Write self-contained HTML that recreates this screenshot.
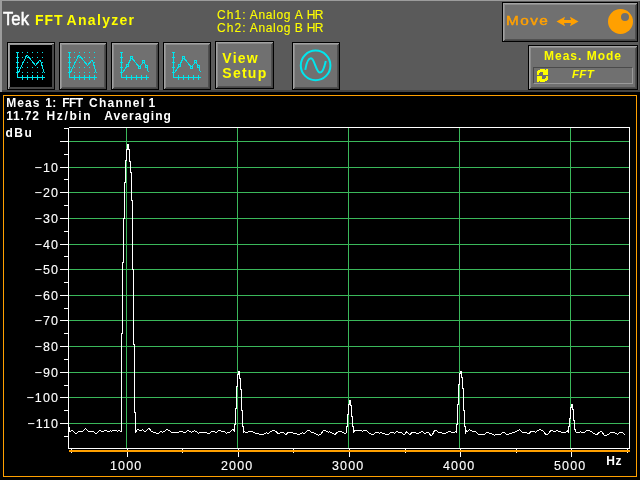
<!DOCTYPE html>
<html><head><meta charset="utf-8"><title>Tek FFT Analyzer</title>
<style>
html,body{margin:0;padding:0;background:#000;}
body{width:640px;height:480px;position:relative;overflow:hidden;font-family:"Liberation Sans",sans-serif;}
.abs{position:absolute;}
#top{left:0;top:0;width:640px;height:92px;background:#5a5a5a;box-shadow:inset 2px 1px 0 #9c9c9c, inset -1px -2px 0 #444;}
.btn{position:absolute;background:#707070;border:1px solid #000;box-sizing:border-box;
  box-shadow:inset 1px 1px 0 #a2a2a2, inset -1px -1px 0 #444, inset 2px 2px 0 #8c8c8c, inset -2px -2px 0 #505050;}
.btn.sel{background:#000;box-shadow:inset 1px 1px 0 #a6a6a6, inset -2px -2px 0 #484848, inset 2px 2px 0 #929292;}
.t{position:absolute;white-space:nowrap;line-height:1;}
.y{color:#ffff00;}
.o{color:#ffa000;}
.w{color:#fff;}
svg{position:absolute;left:0;top:0;}
.ax{font-family:"Liberation Sans",sans-serif;font-size:12.5px;fill:#fff;letter-spacing:1.15px;stroke:#fff;stroke-width:0.12px;}
#wrap{position:absolute;left:0;top:0;width:640px;height:480px;will-change:transform;}
</style></head><body><div id="wrap">
<div id="top" class="abs"></div>
<div class="t w" style="left:3px;top:9px;font-size:19px;-webkit-text-stroke:0.5px #fff;transform-origin:0 0;transform:scaleX(0.88);">Tek</div>
<div class="t y" style="left:35px;top:13px;font-size:14px;font-weight:bold;letter-spacing:0.95px;">FFT</div>
<div class="t y" style="left:66.6px;top:13px;font-size:14px;font-weight:bold;letter-spacing:1.3px;">Analyzer</div>
<div class="t y" style="left:216.9px;top:8.5px;font-size:12px;letter-spacing:1.1px;-webkit-text-stroke:0.1px #ff0;">Ch1:</div>
<div class="t y" style="left:249.75px;top:8.5px;font-size:12px;letter-spacing:0.67px;-webkit-text-stroke:0.1px #ff0;">Analog</div>
<div class="t y" style="left:294.8px;top:8.5px;font-size:12px;letter-spacing:0px;-webkit-text-stroke:0.1px #ff0;">A</div>
<div class="t y" style="left:306.8px;top:8.5px;font-size:12px;letter-spacing:-0.6px;-webkit-text-stroke:0.1px #ff0;">HR</div>
<div class="t y" style="left:216.9px;top:21.8px;font-size:12px;letter-spacing:1.1px;-webkit-text-stroke:0.1px #ff0;">Ch2:</div>
<div class="t y" style="left:249.75px;top:21.8px;font-size:12px;letter-spacing:0.67px;-webkit-text-stroke:0.1px #ff0;">Analog</div>
<div class="t y" style="left:294.7px;top:21.8px;font-size:12px;letter-spacing:0px;-webkit-text-stroke:0.1px #ff0;">B</div>
<div class="t y" style="left:306.8px;top:21.8px;font-size:12px;letter-spacing:-0.6px;-webkit-text-stroke:0.1px #ff0;">HR</div>

<div class="btn sel" style="left:7px;top:42px;width:48px;height:48px;"></div>
<div class="btn" style="left:59px;top:42px;width:48px;height:48px;"></div>
<div class="btn" style="left:111px;top:42px;width:48px;height:48px;"></div>
<div class="btn" style="left:163px;top:42px;width:48px;height:48px;"></div>
<div class="btn" style="left:215px;top:41px;width:59px;height:48px;"></div>
<div class="t y" style="left:222.3px;top:51.25px;font-size:14px;font-weight:bold;letter-spacing:1.25px;line-height:14.5px;">View<br>Setup</div>
<div class="btn" style="left:292px;top:42px;width:48px;height:48px;"></div>

<div class="btn" style="left:502px;top:2px;width:136px;height:40px;"></div>
<div class="t o" style="left:505.8px;top:14px;font-size:13px;letter-spacing:1.2px;-webkit-text-stroke:0.45px #ffa000;transform-origin:0 0;transform:scaleX(1.18);">Move</div>
<div class="btn" style="left:528px;top:45px;width:110px;height:45px;"></div>
<div class="t y" style="left:544px;top:50px;font-size:12px;font-weight:bold;letter-spacing:1.0px;">Meas. Mode</div>
<div class="abs" style="left:533px;top:67px;width:100px;height:17px;box-sizing:border-box;background:#707070;border:1px solid;border-color:#4a4a4a #9a9a9a #9a9a9a #4a4a4a;"></div>
<div class="t y" style="left:572px;top:68.8px;font-size:11.5px;font-weight:bold;font-style:italic;letter-spacing:0.3px;">FFT</div>

<div class="abs" style="left:3px;top:95px;width:634px;height:382px;box-sizing:border-box;border:1px solid #ffa000;"></div>
<div class="t w" style="left:6.25px;top:97px;font-size:12px;font-weight:bold;letter-spacing:1.07px;">Meas</div>
<div class="t w" style="left:45.3px;top:97px;font-size:12px;font-weight:bold;letter-spacing:0.3px;">1:</div>
<div class="t w" style="left:62.2px;top:97px;font-size:12px;font-weight:bold;letter-spacing:-0.6px;">FFT</div>
<div class="t w" style="left:89px;top:97px;font-size:12px;font-weight:bold;letter-spacing:1.29px;">Channel</div>
<div class="t w" style="left:148.5px;top:97px;font-size:12px;font-weight:bold;letter-spacing:0px;">1</div>
<div class="t w" style="left:6.3px;top:110px;font-size:12px;font-weight:bold;letter-spacing:0.8px;">11.72</div>
<div class="t w" style="left:46.6px;top:110px;font-size:12px;font-weight:bold;letter-spacing:1.61px;">Hz/bin</div>
<div class="t w" style="left:104.2px;top:110px;font-size:12px;font-weight:bold;letter-spacing:1.06px;">Averaging</div>

<div class="t w" style="left:5.5px;top:127.3px;font-size:12px;font-weight:bold;letter-spacing:1.5px;">dBu</div>
<div class="t w" style="left:606.3px;top:455px;font-size:12px;font-weight:bold;letter-spacing:0.5px;">Hz</div>

<svg width="640" height="480" viewBox="0 0 640 480">
<g shape-rendering="crispEdges">
<rect x="69" y="141" width="560" height="1" fill="#3ab85a"/><rect x="69" y="167" width="560" height="1" fill="#3ab85a"/><rect x="69" y="192" width="560" height="1" fill="#3ab85a"/><rect x="69" y="218" width="560" height="1" fill="#3ab85a"/><rect x="69" y="244" width="560" height="1" fill="#3ab85a"/><rect x="69" y="269" width="560" height="1" fill="#3ab85a"/><rect x="69" y="295" width="560" height="1" fill="#3ab85a"/><rect x="69" y="320" width="560" height="1" fill="#3ab85a"/><rect x="69" y="346" width="560" height="1" fill="#3ab85a"/><rect x="69" y="372" width="560" height="1" fill="#3ab85a"/><rect x="69" y="397" width="560" height="1" fill="#3ab85a"/><rect x="69" y="423" width="560" height="1" fill="#3ab85a"/><rect x="126" y="128" width="1" height="320" fill="#3ab85a"/><rect x="237" y="128" width="1" height="320" fill="#3ab85a"/><rect x="348" y="128" width="1" height="320" fill="#3ab85a"/><rect x="459" y="128" width="1" height="320" fill="#3ab85a"/><rect x="570" y="128" width="1" height="320" fill="#3ab85a"/>
<rect x="69" y="127" width="561" height="1" fill="#fff"/>
<rect x="68" y="128" width="1" height="321" fill="#fff"/>
<rect x="629" y="127" width="1" height="322" fill="#fff"/>
<rect x="68" y="448" width="562" height="1" fill="#fff"/>
<rect x="60" y="141" width="9" height="1" fill="#fff"/><rect x="64" y="128" width="5" height="1" fill="#fff"/><rect x="60" y="167" width="9" height="1" fill="#fff"/><rect x="64" y="154" width="5" height="1" fill="#fff"/><rect x="60" y="192" width="9" height="1" fill="#fff"/><rect x="64" y="179" width="5" height="1" fill="#fff"/><rect x="60" y="218" width="9" height="1" fill="#fff"/><rect x="64" y="205" width="5" height="1" fill="#fff"/><rect x="60" y="244" width="9" height="1" fill="#fff"/><rect x="64" y="231" width="5" height="1" fill="#fff"/><rect x="60" y="269" width="9" height="1" fill="#fff"/><rect x="64" y="256" width="5" height="1" fill="#fff"/><rect x="60" y="295" width="9" height="1" fill="#fff"/><rect x="64" y="282" width="5" height="1" fill="#fff"/><rect x="60" y="320" width="9" height="1" fill="#fff"/><rect x="64" y="308" width="5" height="1" fill="#fff"/><rect x="60" y="346" width="9" height="1" fill="#fff"/><rect x="64" y="333" width="5" height="1" fill="#fff"/><rect x="60" y="372" width="9" height="1" fill="#fff"/><rect x="64" y="359" width="5" height="1" fill="#fff"/><rect x="60" y="397" width="9" height="1" fill="#fff"/><rect x="64" y="385" width="5" height="1" fill="#fff"/><rect x="60" y="423" width="9" height="1" fill="#fff"/><rect x="64" y="410" width="5" height="1" fill="#fff"/><rect x="64" y="436" width="5" height="1" fill="#fff"/><rect x="127" y="449" width="1" height="8" fill="#fff"/><rect x="238" y="449" width="1" height="8" fill="#fff"/><rect x="349" y="449" width="1" height="8" fill="#fff"/><rect x="460" y="449" width="1" height="8" fill="#fff"/><rect x="571" y="449" width="1" height="8" fill="#fff"/><rect x="71" y="449" width="1" height="4" fill="#fff"/><rect x="182" y="449" width="1" height="4" fill="#fff"/><rect x="293" y="449" width="1" height="4" fill="#fff"/><rect x="405" y="449" width="1" height="4" fill="#fff"/><rect x="516" y="449" width="1" height="4" fill="#fff"/><rect x="627" y="449" width="1" height="4" fill="#fff"/>
<rect x="69" y="450" width="561" height="2" fill="#ffa000"/>
</g>
<text x="59.2" y="171.6" text-anchor="end" class="ax">−10</text><text x="59.2" y="196.6" text-anchor="end" class="ax">−20</text><text x="59.2" y="222.6" text-anchor="end" class="ax">−30</text><text x="59.2" y="248.6" text-anchor="end" class="ax">−40</text><text x="59.2" y="273.6" text-anchor="end" class="ax">−50</text><text x="59.2" y="299.6" text-anchor="end" class="ax">−60</text><text x="59.2" y="324.6" text-anchor="end" class="ax">−70</text><text x="59.2" y="350.6" text-anchor="end" class="ax">−80</text><text x="59.2" y="376.6" text-anchor="end" class="ax">−90</text><text x="59.2" y="401.6" text-anchor="end" class="ax">−100</text><text x="59.2" y="427.6" text-anchor="end" class="ax">−110</text><text x="126.2" y="470" text-anchor="middle" class="ax">1000</text><text x="237.2" y="470" text-anchor="middle" class="ax">2000</text><text x="348.2" y="470" text-anchor="middle" class="ax">3000</text><text x="459.2" y="470" text-anchor="middle" class="ax">4000</text><text x="570.2" y="470" text-anchor="middle" class="ax">5000</text>
<polyline points="69.5,426.5 69.5,431.5 70.5,431.5 71.5,430.5 72.5,430.5 73.5,431.5 74.5,432.5 75.5,433.5 76.5,433.5 77.5,432.5 78.5,431.5 79.5,431.5 80.5,431.5 81.5,431.5 82.5,431.5 83.5,430.5 84.5,429.5 85.5,428.5 86.5,429.5 87.5,430.5 88.5,431.5 89.5,431.5 90.5,431.5 91.5,431.5 92.5,431.5 93.5,431.5 94.5,432.5 95.5,433.5 96.5,433.5 97.5,432.5 98.5,431.5 99.5,430.5 100.5,430.5 101.5,431.5 102.5,431.5 103.5,431.5 104.5,430.5 105.5,430.5 106.5,430.5 107.5,431.5 108.5,431.5 109.5,431.5 110.5,430.5 111.5,431.5 112.5,430.5 113.5,430.5 114.5,430.5 115.5,430.5 116.5,430.5 117.5,431.5 118.5,430.5 119.5,430.5 120.5,431.5 121.5,431.5 121.5,333.5 122.5,333.5 122.5,262.5 123.5,262.5 123.5,218.5 124.5,218.5 124.5,182.5 125.5,182.5 125.5,160.5 126.5,160.5 126.5,149.5 127.5,149.5 127.5,144.5 128.5,144.5 128.5,149.5 129.5,149.5 129.5,161.5 130.5,161.5 130.5,172.5 131.5,172.5 131.5,200.5 132.5,200.5 132.5,269.5 133.5,269.5 133.5,344.5 134.5,344.5 134.5,412.5 135.5,412.5 135.5,432.5 136.5,430.5 137.5,429.5 138.5,429.5 139.5,430.5 140.5,430.5 141.5,430.5 142.5,429.5 143.5,430.5 144.5,431.5 145.5,431.5 146.5,430.5 147.5,429.5 148.5,428.5 149.5,428.5 150.5,430.5 151.5,431.5 152.5,431.5 153.5,432.5 154.5,432.5 155.5,432.5 156.5,433.5 157.5,433.5 158.5,433.5 159.5,432.5 160.5,431.5 161.5,431.5 162.5,432.5 163.5,431.5 164.5,431.5 165.5,430.5 166.5,429.5 167.5,429.5 168.5,430.5 169.5,430.5 170.5,431.5 171.5,432.5 172.5,432.5 173.5,432.5 174.5,432.5 175.5,432.5 176.5,432.5 177.5,432.5 178.5,432.5 179.5,431.5 180.5,431.5 181.5,431.5 182.5,431.5 183.5,432.5 184.5,432.5 185.5,432.5 186.5,431.5 187.5,430.5 188.5,430.5 189.5,431.5 190.5,431.5 191.5,432.5 192.5,431.5 193.5,431.5 194.5,430.5 195.5,431.5 196.5,431.5 197.5,432.5 198.5,433.5 199.5,432.5 200.5,432.5 201.5,432.5 202.5,432.5 203.5,432.5 204.5,432.5 205.5,432.5 206.5,432.5 207.5,433.5 208.5,433.5 209.5,433.5 210.5,432.5 211.5,431.5 212.5,431.5 213.5,431.5 214.5,431.5 215.5,432.5 216.5,432.5 217.5,431.5 218.5,430.5 219.5,430.5 220.5,430.5 221.5,431.5 222.5,431.5 223.5,431.5 224.5,431.5 225.5,432.5 226.5,433.5 227.5,432.5 228.5,432.5 229.5,432.5 230.5,431.5 231.5,430.5 232.5,429.5 233.5,429.5 234.5,431.5 234.5,424.5 235.5,424.5 235.5,408.5 236.5,408.5 236.5,386.5 237.5,386.5 237.5,374.5 238.5,374.5 238.5,371.5 239.5,371.5 239.5,378.5 240.5,378.5 240.5,389.5 241.5,389.5 241.5,410.5 242.5,410.5 242.5,426.5 243.5,426.5 243.5,432.5 244.5,431.5 245.5,432.5 246.5,432.5 247.5,432.5 248.5,431.5 249.5,431.5 250.5,431.5 251.5,431.5 252.5,431.5 253.5,432.5 254.5,432.5 255.5,433.5 256.5,433.5 257.5,433.5 258.5,433.5 259.5,434.5 260.5,434.5 261.5,434.5 262.5,434.5 263.5,434.5 264.5,433.5 265.5,433.5 266.5,432.5 267.5,433.5 268.5,433.5 269.5,432.5 270.5,431.5 271.5,431.5 272.5,430.5 273.5,430.5 274.5,430.5 275.5,431.5 276.5,431.5 277.5,433.5 278.5,433.5 279.5,433.5 280.5,432.5 281.5,432.5 282.5,432.5 283.5,432.5 284.5,433.5 285.5,434.5 286.5,434.5 287.5,432.5 288.5,432.5 289.5,432.5 290.5,432.5 291.5,432.5 292.5,432.5 293.5,433.5 294.5,433.5 295.5,433.5 296.5,433.5 297.5,434.5 298.5,434.5 299.5,434.5 300.5,433.5 301.5,433.5 302.5,432.5 303.5,433.5 304.5,433.5 305.5,432.5 306.5,431.5 307.5,430.5 308.5,430.5 309.5,430.5 310.5,431.5 311.5,432.5 312.5,432.5 313.5,432.5 314.5,433.5 315.5,433.5 316.5,434.5 317.5,434.5 318.5,435.5 319.5,434.5 320.5,434.5 321.5,433.5 322.5,431.5 323.5,430.5 324.5,430.5 325.5,430.5 326.5,431.5 327.5,431.5 328.5,432.5 329.5,431.5 330.5,432.5 331.5,432.5 332.5,433.5 333.5,433.5 334.5,434.5 335.5,434.5 336.5,432.5 337.5,432.5 338.5,431.5 339.5,431.5 340.5,431.5 341.5,431.5 342.5,432.5 343.5,432.5 344.5,433.5 345.5,433.5 346.5,432.5 346.5,426.5 347.5,426.5 347.5,414.5 348.5,414.5 348.5,404.5 349.5,404.5 349.5,400.5 350.5,400.5 350.5,405.5 351.5,405.5 351.5,416.5 352.5,416.5 352.5,426.5 353.5,426.5 353.5,432.5 354.5,430.5 355.5,430.5 356.5,430.5 357.5,430.5 358.5,430.5 359.5,430.5 360.5,430.5 361.5,430.5 362.5,431.5 363.5,430.5 364.5,430.5 365.5,430.5 366.5,430.5 367.5,431.5 368.5,432.5 369.5,433.5 370.5,433.5 371.5,434.5 372.5,434.5 373.5,434.5 374.5,433.5 375.5,432.5 376.5,432.5 377.5,432.5 378.5,432.5 379.5,433.5 380.5,432.5 381.5,432.5 382.5,433.5 383.5,433.5 384.5,433.5 385.5,434.5 386.5,434.5 387.5,434.5 388.5,434.5 389.5,433.5 390.5,432.5 391.5,432.5 392.5,432.5 393.5,432.5 394.5,433.5 395.5,432.5 396.5,431.5 397.5,431.5 398.5,432.5 399.5,432.5 400.5,432.5 401.5,432.5 402.5,433.5 403.5,434.5 404.5,434.5 405.5,433.5 406.5,431.5 407.5,432.5 408.5,433.5 409.5,434.5 410.5,434.5 411.5,432.5 412.5,432.5 413.5,432.5 414.5,432.5 415.5,432.5 416.5,433.5 417.5,433.5 418.5,433.5 419.5,432.5 420.5,432.5 421.5,431.5 422.5,431.5 423.5,432.5 424.5,433.5 425.5,433.5 426.5,432.5 427.5,432.5 428.5,432.5 429.5,433.5 430.5,435.5 431.5,435.5 432.5,434.5 433.5,432.5 434.5,430.5 435.5,430.5 436.5,430.5 437.5,431.5 438.5,432.5 439.5,432.5 440.5,432.5 441.5,432.5 442.5,433.5 443.5,433.5 444.5,433.5 445.5,433.5 446.5,432.5 447.5,432.5 448.5,431.5 449.5,431.5 450.5,431.5 451.5,432.5 452.5,432.5 453.5,432.5 454.5,432.5 455.5,431.5 456.5,432.5 456.5,424.5 457.5,424.5 457.5,404.5 458.5,404.5 458.5,384.5 459.5,384.5 459.5,373.5 460.5,373.5 460.5,371.5 461.5,371.5 461.5,377.5 462.5,377.5 462.5,388.5 463.5,388.5 463.5,410.5 464.5,410.5 464.5,426.5 465.5,426.5 465.5,433.5 466.5,430.5 467.5,431.5 468.5,430.5 469.5,429.5 470.5,430.5 471.5,430.5 472.5,431.5 473.5,431.5 474.5,431.5 475.5,431.5 476.5,432.5 477.5,433.5 478.5,434.5 479.5,434.5 480.5,434.5 481.5,434.5 482.5,434.5 483.5,434.5 484.5,434.5 485.5,433.5 486.5,432.5 487.5,432.5 488.5,432.5 489.5,433.5 490.5,433.5 491.5,433.5 492.5,434.5 493.5,434.5 494.5,435.5 495.5,434.5 496.5,434.5 497.5,434.5 498.5,434.5 499.5,434.5 500.5,434.5 501.5,433.5 502.5,432.5 503.5,432.5 504.5,432.5 505.5,433.5 506.5,434.5 507.5,434.5 508.5,434.5 509.5,433.5 510.5,433.5 511.5,433.5 512.5,432.5 513.5,432.5 514.5,432.5 515.5,431.5 516.5,431.5 517.5,430.5 518.5,430.5 519.5,429.5 520.5,430.5 521.5,431.5 522.5,432.5 523.5,432.5 524.5,432.5 525.5,432.5 526.5,432.5 527.5,433.5 528.5,433.5 529.5,433.5 530.5,431.5 531.5,431.5 532.5,431.5 533.5,431.5 534.5,431.5 535.5,432.5 536.5,431.5 537.5,430.5 538.5,430.5 539.5,429.5 540.5,429.5 541.5,430.5 542.5,430.5 543.5,431.5 544.5,432.5 545.5,434.5 546.5,434.5 547.5,434.5 548.5,433.5 549.5,432.5 550.5,430.5 551.5,430.5 552.5,430.5 553.5,431.5 554.5,431.5 555.5,431.5 556.5,430.5 557.5,430.5 558.5,431.5 559.5,431.5 560.5,431.5 561.5,432.5 562.5,432.5 563.5,432.5 564.5,432.5 565.5,432.5 566.5,431.5 567.5,430.5 568.5,432.5 568.5,426.5 569.5,426.5 569.5,418.5 570.5,418.5 570.5,407.5 571.5,407.5 571.5,404.5 572.5,404.5 572.5,409.5 573.5,409.5 573.5,420.5 574.5,420.5 574.5,429.5 575.5,429.5 575.5,431.5 576.5,432.5 577.5,432.5 578.5,432.5 579.5,432.5 580.5,431.5 581.5,432.5 582.5,432.5 583.5,432.5 584.5,432.5 585.5,431.5 586.5,430.5 587.5,430.5 588.5,430.5 589.5,430.5 590.5,431.5 591.5,431.5 592.5,432.5 593.5,433.5 594.5,433.5 595.5,434.5 596.5,434.5 597.5,434.5 598.5,432.5 599.5,432.5 600.5,431.5 601.5,431.5 602.5,432.5 603.5,434.5 604.5,435.5 605.5,435.5 606.5,435.5 607.5,434.5 608.5,434.5 609.5,433.5 610.5,432.5 611.5,432.5 612.5,432.5 613.5,432.5 614.5,432.5 615.5,433.5 616.5,433.5 617.5,434.5 618.5,433.5 619.5,432.5 620.5,432.5 621.5,432.5 622.5,432.5 623.5,433.5 624.5,434.5 625.5,435.5" fill="none" stroke="#fff" stroke-width="1" shape-rendering="crispEdges"/>
<g transform="translate(7,0)" fill="#00e6ee" shape-rendering="crispEdges"><rect x="10" y="52" width="1" height="26"/><rect x="10" y="77" width="28" height="1"/><rect x="9" y="52" width="3" height="1"/><rect x="9" y="57" width="3" height="1"/><rect x="9" y="62" width="3" height="1"/><rect x="9" y="67" width="3" height="1"/><rect x="9" y="72" width="3" height="1"/><rect x="15" y="75" width="1" height="5"/><rect x="20" y="75" width="1" height="5"/><rect x="25" y="75" width="1" height="5"/><rect x="30" y="75" width="1" height="5"/><rect x="35" y="75" width="1" height="5"/><rect x="15" y="52" width="1" height="1"/><rect x="20" y="52" width="1" height="1"/><rect x="25" y="52" width="1" height="1"/><rect x="30" y="52" width="1" height="1"/><rect x="35" y="52" width="1" height="1"/><rect x="15" y="57" width="1" height="1"/><rect x="20" y="57" width="1" height="1"/><rect x="25" y="57" width="1" height="1"/><rect x="30" y="57" width="1" height="1"/><rect x="35" y="57" width="1" height="1"/><rect x="15" y="62" width="1" height="1"/><rect x="20" y="62" width="1" height="1"/><rect x="25" y="62" width="1" height="1"/><rect x="30" y="62" width="1" height="1"/><rect x="35" y="62" width="1" height="1"/><rect x="15" y="67" width="1" height="1"/><rect x="20" y="67" width="1" height="1"/><rect x="25" y="67" width="1" height="1"/><rect x="30" y="67" width="1" height="1"/><rect x="35" y="67" width="1" height="1"/><rect x="15" y="72" width="1" height="1"/><rect x="20" y="72" width="1" height="1"/><rect x="25" y="72" width="1" height="1"/><rect x="30" y="72" width="1" height="1"/><rect x="35" y="72" width="1" height="1"/></g><g transform="translate(7,0)" fill="none" stroke="#00e6ee" stroke-width="1" shape-rendering="crispEdges"><polyline points="11.5,72.5 19.5,55.5 20.5,55.5 28.5,65.5 32.5,60.5 33.5,60.5 37.5,73.5"/></g><g transform="translate(59,0)" fill="#00e6ee" shape-rendering="crispEdges"><rect x="10" y="52" width="1" height="26"/><rect x="10" y="77" width="28" height="1"/><rect x="9" y="52" width="3" height="1"/><rect x="9" y="57" width="3" height="1"/><rect x="9" y="62" width="3" height="1"/><rect x="9" y="67" width="3" height="1"/><rect x="9" y="72" width="3" height="1"/><rect x="15" y="75" width="1" height="5"/><rect x="20" y="75" width="1" height="5"/><rect x="25" y="75" width="1" height="5"/><rect x="30" y="75" width="1" height="5"/><rect x="35" y="75" width="1" height="5"/><rect x="15" y="52" width="1" height="1"/><rect x="20" y="52" width="1" height="1"/><rect x="25" y="52" width="1" height="1"/><rect x="30" y="52" width="1" height="1"/><rect x="35" y="52" width="1" height="1"/><rect x="15" y="57" width="1" height="1"/><rect x="20" y="57" width="1" height="1"/><rect x="25" y="57" width="1" height="1"/><rect x="30" y="57" width="1" height="1"/><rect x="35" y="57" width="1" height="1"/><rect x="15" y="62" width="1" height="1"/><rect x="20" y="62" width="1" height="1"/><rect x="25" y="62" width="1" height="1"/><rect x="30" y="62" width="1" height="1"/><rect x="35" y="62" width="1" height="1"/><rect x="15" y="67" width="1" height="1"/><rect x="20" y="67" width="1" height="1"/><rect x="25" y="67" width="1" height="1"/><rect x="30" y="67" width="1" height="1"/><rect x="35" y="67" width="1" height="1"/><rect x="15" y="72" width="1" height="1"/><rect x="20" y="72" width="1" height="1"/><rect x="25" y="72" width="1" height="1"/><rect x="30" y="72" width="1" height="1"/><rect x="35" y="72" width="1" height="1"/></g><g transform="translate(59,0)" fill="none" stroke="#00e6ee" stroke-width="1" shape-rendering="crispEdges"><polyline points="11.5,72.5 19.5,55.5 20.5,55.5 28.5,65.5 32.5,60.5 33.5,60.5 37.5,73.5"/></g><g transform="translate(111,0)" fill="#00e6ee" shape-rendering="crispEdges"><rect x="10" y="52" width="1" height="26"/><rect x="10" y="77" width="28" height="1"/><rect x="9" y="52" width="3" height="1"/><rect x="9" y="57" width="3" height="1"/><rect x="9" y="62" width="3" height="1"/><rect x="9" y="67" width="3" height="1"/><rect x="9" y="72" width="3" height="1"/><rect x="15" y="75" width="1" height="5"/><rect x="20" y="75" width="1" height="5"/><rect x="25" y="75" width="1" height="5"/><rect x="30" y="75" width="1" height="5"/><rect x="35" y="75" width="1" height="5"/></g><g transform="translate(111,0)" fill="none" stroke="#00e6ee" stroke-width="1" shape-rendering="crispEdges"><polyline points="11.5,72.5 16.5,65.5 20.5,57.5 28.5,67.5 32.5,61.5 35.5,66.5 37.5,72.5"/><rect x="15.5" y="64.5" width="2" height="2" fill="#707070" stroke-width="1" shape-rendering="crispEdges"/><rect x="19.5" y="56.5" width="2" height="2" fill="#707070" stroke-width="1" shape-rendering="crispEdges"/><rect x="27.5" y="66.5" width="2" height="2" fill="#707070" stroke-width="1" shape-rendering="crispEdges"/><rect x="31.5" y="60.5" width="2" height="2" fill="#707070" stroke-width="1" shape-rendering="crispEdges"/><rect x="34.5" y="65.5" width="2" height="2" fill="#707070" stroke-width="1" shape-rendering="crispEdges"/></g><g transform="translate(163,0)" fill="#00e6ee" shape-rendering="crispEdges"><rect x="10" y="52" width="1" height="26"/><rect x="10" y="77" width="28" height="1"/><rect x="9" y="52" width="3" height="1"/><rect x="9" y="57" width="3" height="1"/><rect x="9" y="62" width="3" height="1"/><rect x="9" y="67" width="3" height="1"/><rect x="9" y="72" width="3" height="1"/><rect x="15" y="75" width="1" height="5"/><rect x="20" y="75" width="1" height="5"/><rect x="25" y="75" width="1" height="5"/><rect x="30" y="75" width="1" height="5"/><rect x="35" y="75" width="1" height="5"/></g><g transform="translate(163,0)" fill="none" stroke="#00e6ee" stroke-width="1" shape-rendering="crispEdges"><polyline points="11.5,72.5 16.5,65.5 20.5,57.5 28.5,67.5 32.5,61.5 35.5,66.5 37.5,72.5"/><rect x="15.5" y="64.5" width="2" height="2" fill="#707070" stroke-width="1" shape-rendering="crispEdges"/><rect x="19.5" y="56.5" width="2" height="2" fill="#707070" stroke-width="1" shape-rendering="crispEdges"/><rect x="27.5" y="66.5" width="2" height="2" fill="#707070" stroke-width="1" shape-rendering="crispEdges"/><rect x="31.5" y="60.5" width="2" height="2" fill="#707070" stroke-width="1" shape-rendering="crispEdges"/><rect x="34.5" y="65.5" width="2" height="2" fill="#707070" stroke-width="1" shape-rendering="crispEdges"/></g>
<!-- sine icon -->
<circle cx="315.6" cy="65.4" r="14.8" fill="none" stroke="#00e6ee" stroke-width="2"/>
<path d="M305.3 69.8 C306.5 62, 308.5 58.2, 311 58.2 C314.5 58.2, 316 72.6, 320 72.6 C322.8 72.6, 324.5 67, 325.8 61" fill="none" stroke="#00e6ee" stroke-width="2"/>
<!-- move arrow -->
<path d="M556.5 21.5 L565 16.8 L564 20 H571 L570 16.8 L578.5 21.5 L570 26.2 L571 23 H564 L565 26.2 Z" fill="#ffa000"/>
<!-- knob -->
<circle cx="620.5" cy="21.5" r="12.5" fill="#ffa000"/>
<circle cx="625" cy="17" r="4" fill="#707070"/>
<!-- refresh icon -->
<g fill="#ffff00" shape-rendering="crispEdges"><rect x="540" y="69" width="5" height="1"/><rect x="546" y="69" width="2" height="1"/><rect x="538" y="70" width="10" height="1"/><rect x="537" y="71" width="11" height="1"/><rect x="537" y="72" width="3" height="1"/><rect x="543" y="72" width="5" height="1"/><rect x="537" y="73" width="2" height="1"/><rect x="543" y="73" width="5" height="1"/><rect x="537" y="74" width="2" height="1"/><rect x="543" y="74" width="5" height="1"/><rect x="537" y="76" width="5" height="1"/><rect x="546" y="76" width="2" height="1"/><rect x="537" y="77" width="5" height="1"/><rect x="546" y="77" width="2" height="1"/><rect x="537" y="78" width="5" height="1"/><rect x="545" y="78" width="3" height="1"/><rect x="537" y="79" width="11" height="1"/><rect x="537" y="80" width="10" height="1"/><rect x="537" y="81" width="2" height="1"/><rect x="540" y="81" width="5" height="1"/></g>
</svg>
</div></body></html>
